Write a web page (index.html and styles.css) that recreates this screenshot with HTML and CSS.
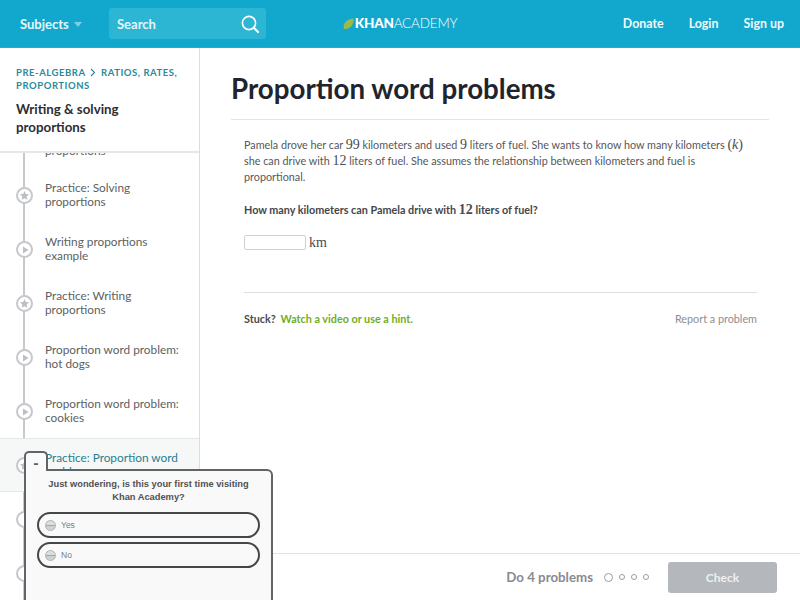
FILE: index.html
```html
<!DOCTYPE html>
<html lang="en">
<head>
<meta charset="utf-8">
<title>Proportion word problems</title>
<link rel="stylesheet" href="styles.css">
</head>
<body>
<div class="app">
  <header class="topbar">
    <div class="top-left">
      <a class="subjects">Subjects <span class="caret"></span></a>
      <div class="search">
        <span>Search</span>
        <svg class="search-icon" width="20" height="20" viewBox="0 0 20 20"><circle cx="9" cy="9" r="6.6" fill="none" stroke="#fff" stroke-width="1.6"/><path d="M13.8 13.8L18 18" stroke="#fff" stroke-width="2.2" stroke-linecap="round"/></svg>
      </div>
    </div>
    <div class="logo">
      <svg width="11" height="12" viewBox="0 0 11 12"><path d="M1 11C-.5 6 3 1 10.500 .5 11 7 7 11.500 1 11z" fill="#9cb94a"/></svg>
      <span class="logo-k">KHAN</span><span class="logo-a">ACADEMY</span>
    </div>
    <nav class="top-right">
      <a>Donate</a><a>Login</a><a>Sign up</a>
    </nav>
  </header>
  <div class="content">
    <aside class="sidebar">
      <div class="side-head">
        <div class="crumbs">PRE-ALGEBRA <svg class="chev" width="6" height="9" viewBox="0 0 6 9"><path d="M1 1l3.500 3.500L1 8" fill="none" stroke="#2b8a9c" stroke-width="1.100"/></svg> RATIOS, RATES, PROPORTIONS</div>
        <div class="side-title">Writing &amp; solving proportions</div>
      </div>
      <div class="list-clip">
        <ul class="list">
          <li class="item clipped"><span class="dot"><svg width="10" height="10" viewBox="0 0 10 10"><path d="M3 1.500v7l5.500-3.500z" class="glyph"/></svg></span><span class="label">Worked example: solving proportions</span></li>
          <li class="item"><span class="dot"><svg width="11" height="11" viewBox="0 0 12 12"><path d="M6 1l1.500 3.300 3.500.4-2.600 2.400.7 3.500L6 8.900l-3.100 1.700.7-3.500L1 4.700l3.500-.4z" class="glyph"/></svg></span><span class="label">Practice: Solving proportions</span></li>
          <li class="item"><span class="dot"><svg width="10" height="10" viewBox="0 0 10 10"><path d="M3 1.500v7l5.500-3.500z" class="glyph"/></svg></span><span class="label">Writing proportions example</span></li>
          <li class="item"><span class="dot"><svg width="11" height="11" viewBox="0 0 12 12"><path d="M6 1l1.500 3.300 3.500.4-2.600 2.400.7 3.500L6 8.900l-3.100 1.700.7-3.500L1 4.700l3.500-.4z" class="glyph"/></svg></span><span class="label">Practice: Writing proportions</span></li>
          <li class="item"><span class="dot"><svg width="10" height="10" viewBox="0 0 10 10"><path d="M3 1.500v7l5.500-3.500z" class="glyph"/></svg></span><span class="label">Proportion word problem: hot dogs</span></li>
          <li class="item"><span class="dot"><svg width="10" height="10" viewBox="0 0 10 10"><path d="M3 1.500v7l5.500-3.500z" class="glyph"/></svg></span><span class="label">Proportion word problem: cookies</span></li>
          <li class="item current"><span class="dot"><svg width="11" height="11" viewBox="0 0 12 12"><path d="M6 1l1.500 3.300 3.500.4-2.600 2.400.7 3.500L6 8.900l-3.100 1.700.7-3.500L1 4.700l3.500-.4z" class="glyph"/></svg></span><span class="label">Practice: Proportion word problems</span></li>
          <li class="item"><span class="dot"></span></li>
          <li class="item"><span class="dot"></span></li>
        </ul>
      </div>
    </aside>
    <main class="main">
      <div class="article">
        <h1 class="title">Proportion word problems</h1>
        <div class="problem">
          <p class="para">Pamela drove her car <span class="math">99</span> kilometers and used <span class="math">9</span> liters of fuel. She wants to know how many kilometers <span class="math">(<i>k</i>)</span> she can drive with <span class="math">12</span> liters of fuel. She assumes the relationship between kilometers and fuel is proportional.</p>
          <p class="question">How many kilometers can Pamela drive with <span class="math">12</span> liters of fuel?</p>
          <div class="answer"><span class="input"></span><span class="math unit">km</span></div>
          <div class="stuck">
            <div><b class="stuck-q">Stuck?</b> <b class="hint">Watch a video or use a hint.</b></div>
            <a class="report">Report a problem</a>
          </div>
        </div>
      </div>
      <footer class="footer">
        <span class="do">Do 4 problems</span>
        <span class="pips"><i class="pip first"></i><i class="pip"></i><i class="pip"></i><i class="pip"></i></span>
        <span class="check">Check</span>
      </footer>
    </main>
  </div>
  <div class="survey">
    <div class="tab">-</div>
    <div class="panel">
      <div class="survey-q">Just wondering, is this your first time visiting Khan Academy?</div>
      <div class="option"><span class="radio"></span>Yes</div>
      <div class="option"><span class="radio"></span>No</div>
    </div>
  </div>
</div>
</body>
</html>
```
FILE: styles.css
```css
* { box-sizing: border-box; }
html, body { margin: 0; height: 100%; }
body { font-family: Lato, "Liberation Sans", sans-serif; color: #21242c; background: #fff; overflow: hidden; }
.app { position: relative; width: 800px; height: 600px; display: flex; flex-direction: column; overflow: hidden; }

.topbar { height: 48px; flex: none; background: #12a8cd; border-bottom: 1px solid #2aa9c9; display: grid; grid-template-columns: 1fr auto 1fr; align-items: center; color: #fff; font-size: 13px; font-weight: 700; }
.top-left { display: flex; align-items: center; padding-left: 20px; }
.subjects { display: flex; align-items: center; width: 89px; color: #e8f6fa; }
.caret { width: 0; height: 0; margin-left: 5px; margin-top: 2px; border: 4px solid transparent; border-top: 5px solid #7fd0e4; border-bottom: 0; }
.search { width: 157px; height: 31px; background: #2cb6d4; border-radius: 3px; display: flex; align-items: center; justify-content: space-between; padding: 0 6px 0 8px; color: #e3f5f9; }
.logo { display: flex; align-items: center; font-size: 13.500px; line-height: 1; letter-spacing: -.2px; padding-top: 1px; }
.logo svg { margin-right: 1px; }
.logo-k { font-weight: 900; }
.logo-a { font-weight: 300; }
.top-right { display: flex; justify-content: flex-end; gap: 25px; padding-right: 16px; color: #eef9fb; font-size: 12.400px; }

.content { flex: 1; display: flex; min-height: 0; }
.sidebar { width: 200px; flex: none; border-right: 1px solid #dcdddf; display: flex; flex-direction: column; min-height: 0; }
.side-head { height: 105px; flex: none; padding: 19px 16px 0; border-bottom: 2px solid #e6e7e8; position: relative; z-index: 1; background: #fff; }
.crumbs { font-size: 9.500px; line-height: 12.500px; font-weight: 700; letter-spacing: .55px; color: #2b8a9c; }
.chev { margin: 0 2px; vertical-align: -1px; }
.side-title { margin-top: 8px; font-size: 13.300px; line-height: 18px; font-weight: 700; color: #2c2e33; }
.list-clip { flex: 1; overflow: hidden; position: relative; }
.list { list-style: none; margin: -39px 0 0; padding: 0; position: relative; }
.list::before { content: ""; position: absolute; left: 23px; top: 0; bottom: 0; width: 2px; background: #c6c8cb; }
.item { height: 54px; display: flex; align-items: center; position: relative; font-size: 11.800px; line-height: 14px; color: #5d5f63; padding: 0 12px 0 45px; }
.item.clipped { padding-top: 5px; }
.item.current { background: #f6f7f7; color: #1f7f92; border-top: 1px solid #e6e7e8; border-bottom: 1px solid #e6e7e8; }
.dot { position: absolute; left: 16px; top: 19px; width: 17px; height: 17px; border-radius: 50%; border: 2px solid #c6c8cb; background: #fff; display: flex; align-items: center; justify-content: center; }
.item.current .dot { top: 18px; }
.glyph { fill: #bdbfc3; }
.label { display: block; }

.main { flex: 1; display: flex; flex-direction: column; min-width: 0; }
.article { flex: 1; padding: 0 31px 0 31px; min-height: 0; }
.title { margin: 0; height: 72px; padding-top: 23px; font-size: 27.700px; line-height: 36px; font-weight: 700; color: #21242c; border-bottom: 1px solid #e3e4e6; width: 538px; }
.problem { padding: 17px 13px 0 13px; font-size: 10.800px; line-height: 16px; color: #55575c; }
.para { margin: 0; }
.math { font-family: "Liberation Serif", serif; font-size: 14px; line-height: 1; color: #4a4c50; }
.question { margin: 17px 0 0; font-weight: 700; color: #44464b; }
.answer { display: flex; align-items: center; margin-top: 17px; height: 15px; }
.input { width: 62px; height: 15px; border: 1px solid #cfd0d2; border-radius: 2px; background: #fff; margin-right: 3px; }
.unit { font-size: 14px; }
.stuck { margin-top: 42px; width: 513px; border-top: 1px solid #dddee0; padding-top: 18px; display: flex; justify-content: space-between; }
.stuck-q { color: #4a4c50; }
.hint { color: #72ad1f; margin-left: 2px; }
.report { color: #8b8d91; }

.footer { height: 47px; flex: none; border-top: 1px solid #e0e1e3; display: flex; align-items: center; justify-content: flex-end; padding-right: 23px; }
.do { font-size: 13.300px; font-weight: 700; color: #888a8f; margin-right: 11px; }
.pips { display: flex; align-items: center; gap: 6px; margin-right: 19px; }
.pip { display: block; width: 6px; height: 6px; border: 1px solid #9a9c9f; border-radius: 50%; }
.pip.first { width: 9px; height: 9px; }
.check { width: 109px; height: 31px; border-radius: 3px; background: #b4b7bb; color: #eef0f1; font-size: 12px; font-weight: 700; display: flex; align-items: center; justify-content: center; }

.survey { position: absolute; left: 24px; top: 451px; width: 249px; height: 200px; font-family: "Liberation Sans", sans-serif; z-index: 5; }
.tab { position: absolute; left: 0; top: 0; width: 24px; height: 20px; background: #f9f9f9; border: 2px solid #606367; border-bottom: 0; border-radius: 5px 5px 0 0; font-weight: 700; font-size: 15px; line-height: 20px; text-align: center; color: #55575a; z-index: 2; }
.panel { position: absolute; left: 0; top: 18px; width: 249px; height: 182px; background: #f9f9f9; border: 2px solid #606367; border-radius: 0 6px 6px 6px; padding: 7px 11px; }
.survey-q { font-size: 9.300px; line-height: 13px; font-weight: 700; text-align: center; color: #505255; margin-bottom: 8px; padding: 0 4px; }
.option { height: 26px; border: 2px solid #44474a; border-radius: 13px; margin-bottom: 4px; display: flex; align-items: center; padding-left: 6px; font-size: 8.500px; color: #7a7c7f; }
.radio { width: 11px; height: 11px; border-radius: 50%; border: 1px solid #b0b2b5; background: linear-gradient(#dcdddf 42%, #a3a5a8 42%, #a3a5a8 58%, #cfd0d2 58%); margin-right: 5px; }
```
